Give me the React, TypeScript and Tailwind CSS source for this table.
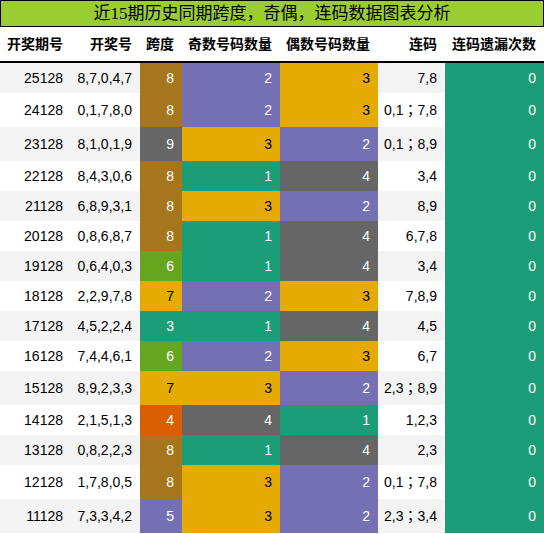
const rows: [string, string, number, number, number, string][] = [
  ["25128", "8,7,0,4,7", 8, 2, 3, "7,8"],
  ["24128", "0,1,7,8,0", 8, 2, 3, "0,1；7,8"],
  ["23128", "8,1,0,1,9", 9, 3, 2, "0,1；8,9"],
  ["22128", "8,4,3,0,6", 8, 1, 4, "3,4"],
  ["21128", "6,8,9,3,1", 8, 3, 2, "8,9"],
  ["20128", "0,8,6,8,7", 8, 1, 4, "6,7,8"],
  ["19128", "0,6,4,0,3", 6, 1, 4, "3,4"],
  ["18128", "2,2,9,7,8", 7, 2, 3, "7,8,9"],
  ["17128", "4,5,2,2,4", 3, 1, 4, "4,5"],
  ["16128", "7,4,4,6,1", 6, 2, 3, "6,7"],
  ["15128", "8,9,2,3,3", 7, 3, 2, "2,3；8,9"],
  ["14128", "2,1,5,1,3", 4, 4, 1, "1,2,3"],
  ["13128", "0,8,2,2,3", 8, 1, 4, "2,3"],
  ["12128", "1,7,8,0,5", 8, 3, 2, "0,1；7,8"],
  ["11128", "7,3,3,4,2", 5, 3, 2, "2,3；3,4"],
];

// Dark2 palette
const spanColor: Record<number, string> = {
  3: "bg-[#1b9e77] text-white",
  4: "bg-[#d95f02] text-white",
  5: "bg-[#7570b3] text-white",
  6: "bg-[#66a61e] text-white",
  7: "bg-[#e6ab02] text-black",
  8: "bg-[#a6761d] text-white",
  9: "bg-[#666666] text-white",
};

const countColor: Record<number, string> = {
  1: "bg-[#1b9e77] text-white",
  2: "bg-[#7570b3] text-white",
  3: "bg-[#e6ab02] text-black",
  4: "bg-[#666666] text-white",
};

const headers = ["开奖期号", "开奖号", "跨度", "奇数号码数量", "偶数号码数量", "连码", "连码遗漏次数"];

const cell = "flex items-center justify-end pr-2 whitespace-nowrap";

export default function App() {
  return (
    <div className="w-[544px] bg-white text-[14px] text-black [font-family:'Liberation_Sans','Noto_Sans_CJK_SC',sans-serif]">
      <div className="flex h-[27px] items-center justify-center border border-black bg-[#9acd32] text-[17px] leading-none [font-family:'Liberation_Serif','Noto_Sans_CJK_SC',serif]">
        近15期历史同期跨度，奇偶，连码数据图表分析
      </div>
      <div className="grid h-[36px] grid-cols-[71px_69px_42px_98px_98px_67px_99px] border-b-2 border-black font-bold">
        {headers.map((h) => (
          <div key={h} className={cell}>
            {h}
          </div>
        ))}
      </div>
      {rows.map(([issue, nums, span, odd, even, run], i) => {
        const tall = run.includes("；");
        const bg = i % 2 === 0 ? "bg-[#f3f3f3]" : "bg-white";
        return (
          <div
            key={issue}
            className={`grid grid-cols-[71px_69px_42px_98px_98px_67px_99px] ${tall ? "h-[34px]" : "h-[30px]"}`}
          >
            <div className={`${cell} ${bg}`}>{issue}</div>
            <div className={`${cell} ${bg}`}>{nums}</div>
            <div className={`${cell} ${spanColor[span]}`}>{span}</div>
            <div className={`${cell} ${countColor[odd]}`}>{odd}</div>
            <div className={`${cell} ${countColor[even]}`}>{even}</div>
            <div className={`${cell} ${bg} [font-family:'Liberation_Sans','Noto_Sans_CJK_TC',sans-serif]`}>{run}</div>
            <div className={`${cell} bg-[#1b9e77] text-white`}>0</div>
          </div>
        );
      })}
    </div>
  );
}
